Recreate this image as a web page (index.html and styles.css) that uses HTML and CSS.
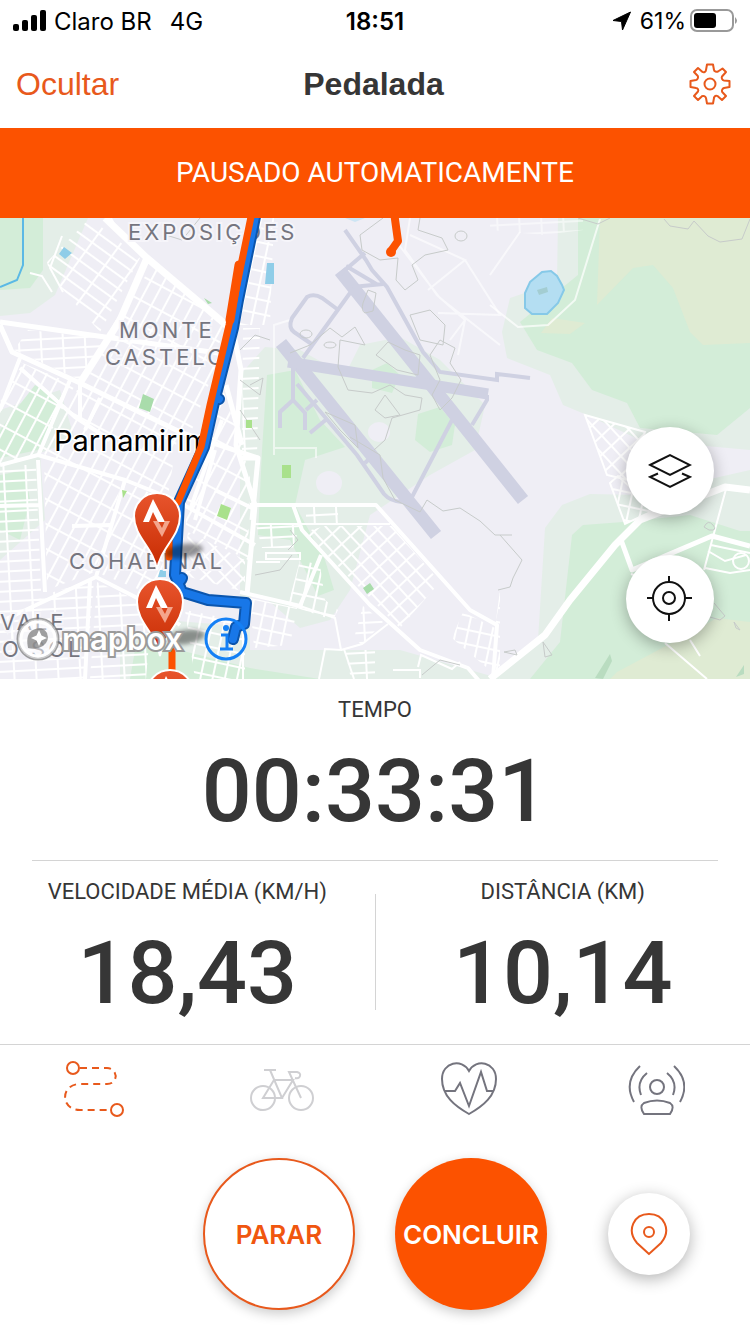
FILE: index.html
```html
<!DOCTYPE html>
<html lang="pt-BR">
<head>
    <meta charset="UTF-8">
    <meta name="viewport" content="width=device-width, initial-scale=1.0">
    <title>Pedalada</title>
    <link rel="stylesheet" href="styles.css">
</head>
<body>
    <!-- Status bar -->
    <div class="status-bar">
        <div class="status-left">
            <svg class="signal" width="34" height="22" viewBox="0 0 34 22">
                <rect x="1" y="14" width="6" height="7" rx="2"/>
                <rect x="10" y="10" width="6" height="11" rx="2"/>
                <rect x="19" y="5" width="6" height="16" rx="2"/>
                <rect x="28" y="0" width="6" height="21" rx="2"/>
            </svg>
            <span>Claro BR</span>
            <span class="network">4G</span>
        </div>
        <div class="status-time">18:51</div>
        <div class="status-right">
            <svg width="20" height="20" viewBox="0 0 20 20"><path d="M18.500 1 1 9.500 9.500 10.500 10.500 19Z" stroke="#000" stroke-linejoin="round"/></svg>
            <span>61%</span>
            <svg class="battery" width="48" height="24" viewBox="0 0 48 24">
                <rect x="1" y="1" width="42" height="21" rx="6" fill="none" stroke="#999" stroke-width="2"/>
                <rect x="4" y="4" width="22" height="15" rx="3"/>
                <path d="M45 8q4 4 0 7z" fill="#999"/>
            </svg>
        </div>
    </div>

    <!-- Navigation -->
    <header class="nav">
        <button class="hide-button">Ocultar</button>
        <h1 class="nav-title">Pedalada</h1>
        <button class="settings-button" aria-label="Configurações">
            <svg width="42" height="42" viewBox="0 0 42 42" fill="none" stroke="#e8591c" stroke-width="2" stroke-linejoin="round">
                <path d="M17 7 18 1.500h6L25 7q0 1 1.500 1.500t2.500 0L33.500 5.500 37 9 33 13.500q-.6 1 0 2.400T35 17.500l5.500.500v6L35 25q-1.200.4-1.800 1.700t0 2.300L37 33l-4 4-4.500-4q-1-.6-2.200 0T25 35l-1 5.500h-6L17 35q-.4-1.200-1.700-1.800t-2.300 0L9 37 5 33l4-4.500q.6-1 0-2.200T7 25l-5.500-1v-6L7 17q1.200-.4 1.800-1.700t0-2.300L5 9l4-4 4.500 4q1 .6 2.200 0T17 7z"/>
                <circle cx="21" cy="21" r="5.500"/>
            </svg>
        </button>
    </header>

    <div class="banner">PAUSADO AUTOMATICAMENTE</div>

    <!-- Map -->
    <main class="map">
        <svg class="map-canvas" viewBox="0 218 750 461" preserveAspectRatio="xMidYMid slice">
            <defs>
                <pattern id="gridA" width="12" height="22" patternUnits="userSpaceOnUse" patternTransform="rotate(28)">
                    <path d="M0 1H12M1 0V22" class="street"/>
                </pattern>
                <pattern id="gridB" width="11" height="24" patternUnits="userSpaceOnUse" patternTransform="rotate(-54)">
                    <path d="M0 1H11M1 0V24" class="street"/>
                </pattern>
                <pattern id="gridC" width="22" height="10" patternUnits="userSpaceOnUse" patternTransform="rotate(-3)">
                    <path d="M0 1H22M1 0V10" class="street"/>
                </pattern>
                <pattern id="gridD" width="14" height="12" patternUnits="userSpaceOnUse" patternTransform="rotate(47)">
                    <path d="M0 1H14M1 0V12" class="street"/>
                </pattern>
                <pattern id="gridE" width="12" height="14" patternUnits="userSpaceOnUse" patternTransform="rotate(12)">
                    <path d="M0 1H12M1 0V14" class="street"/>
                </pattern>
                <linearGradient id="pinFill" x1="0" y1="0" x2="0" y2="1">
                    <stop offset="0" stop-color="#e8552d"/>
                    <stop offset="1" stop-color="#c62a00"/>
                </linearGradient>
                <filter id="soft" x="-30%" y="-60%" width="160%" height="220%"><feGaussianBlur stdDeviation="2"/></filter>
                <g id="pin">
                    <path d="M0 54C-3 32-23 21-23 0a23 23 0 0 1 46 0C23 21 3 32 0 54z" fill="url(#pinFill)" stroke="#fff" stroke-width="2"/>
                    <path d="M-14 6-4-17 8 6H1L-4-4-8 6z" fill="#fff"/>
                    <path d="M-4 5H1L5 12 8 5H13L5 21z" fill="#f4a58c"/>
                </g>
            </defs>

            <rect y="218" width="750" height="461" fill="#efeef5"/>

            <!-- Vegetation -->
            <g fill="#e4eee8">
                <path d="M0 218H88L70 260 55 295 30 313 0 316z"/>
                <path d="M558 218 557 282 510 298 502 332 507 358 550 375 563 405 587 415 640 440 750 450V218z"/>
                <path d="M545 528 562 505 590 494 640 495 750 470V679H495L538 640z"/>
                <path d="M240 375 265 347 300 350 345 375 360 345 400 337 440 360 485 405 475 450 430 475 370 515 350 590 330 620 300 628 262 595 240 600z"/>
                <path d="M250 650H400L540 690H120V652L165 620 250 627z"/>
                <path d="M0 410 60 390 75 440 40 453 45 520 0 560z"/>
            </g>
            <g fill="#d3edd8">
                <path d="M0 218H43V270L30 288 0 290z"/>
                <path d="M578 218V275L520 322 537 350 572 363 592 390 627 403 640 428 717 435 750 408V218z"/>
                <path d="M572 535 583 525 623 522 690 515 740 531H750V679H530L560 642z"/>
                <path d="M267 375 295 370 320 420 345 447 305 460 295 505 325 560 334 590 318 596 290 540 258 535 262 450z"/>
                <path d="M418 414 440 407 455 425 452 445 430 452 415 440z"/>
                <path d="M372 370 387 363 400 375 392 393 372 388z"/>
                <path d="M135 650 160 645 250 668 320 679H130z"/>
                <path d="M0 430 35 385 60 400 38 450 0 458z"/>
                <path d="M0 475 25 470 30 500 20 540 0 530z"/>
            </g>
            <g fill="#dfebd3">
                <path d="M600 218 597 305 633 268 653 265 673 288 690 332 703 345 750 343V218z"/>
                <path d="M541 333 552 318 585 323 570 334z"/>
                <path d="M617 672 677 640 717 618 750 622V679H610z"/>
            </g>
            <ellipse cx="329" cy="483" rx="13" ry="12" fill="#efeef5"/>
            <ellipse cx="379" cy="432" rx="11" ry="10" fill="#efeef5"/>
            <path d="M595 678 610 654 612 661 603 679zM736 677 744 665 744 674z" fill="#b9dcc0"/>

            <!-- Blocks -->
            <path d="M90 218 140 258 100 332 50 275 47 262z" fill="url(#gridB)"/>
            <path d="M155 262 228 325 215 352 105 337 122 310z" fill="url(#gridA)"/>
            <path d="M28 330 105 338 80 380 14 350z" fill="url(#gridC)"/>
            <path d="M108 340 220 354 190 435 84 385z" fill="url(#gridA)"/>
            <path d="M20 362 75 385 40 453 0 465V402z" fill="url(#gridA)"/>
            <path d="M80 385 178 433 168 496 40 453z" fill="url(#gridA)"/>
            <path d="M0 465H36L43 640 0 640z" fill="url(#gridC)"/>
            <path d="M44 457 122 480 100 570 47 590z" fill="url(#gridA)"/>
            <path d="M47 594 94 580 86 679H0V620z" fill="url(#gridC)"/>
            <path d="M126 482 172 503 165 600 98 573z" fill="url(#gridA)"/>
            <path d="M97 582 152 607 146 679H90z" fill="url(#gridC)"/>
            <path d="M186 500 210 445 222 385 250 475 248 560 186 530z" fill="url(#gridA)"/>
            <path d="M188 532 245 560V592L182 575z" fill="url(#gridD)"/>
            <path d="M258 218 274 218 270 325 236 325z" fill="url(#gridE)"/>
            <path d="M243 328H260L257 455 242 452z" fill="url(#gridC)"/>
            <path d="M185 610 245 622 245 679H195z" fill="url(#gridE)"/>
            <path d="M250 598 297 608 290 645 254 648z" fill="url(#gridE)"/>
            <path d="M306 505H338V523H306z" fill="url(#gridC)"/>
            <path d="M256 525H300L293 548H262z" fill="url(#gridC)"/>
            <path d="M325 526H392L440 582 400 628 304 532z" fill="url(#gridD)"/>
            <path d="M300 560 320 565 325 600 338 610 333 620 288 605z" fill="url(#gridE)"/>
            <path d="M363 606 383 622 362 645 354 638z" fill="url(#gridC)"/>
            <path d="M345 650H375V679H351z" fill="url(#gridC)"/>
            <path d="M463 612 495 628 500 590V679L452 638z" fill="url(#gridE)"/>
            <path d="M585 415 645 432 628 480 607 475z" fill="url(#gridD)" class="district"/>
            <path d="M610 483 618 476 655 510 625 524z" fill="url(#gridE)" class="district"/>
            <path d="M490 218H583V230L545 235 490 230z" fill="url(#gridC)" opacity=".5"/>

            <!-- Small streets -->
            <g class="street" fill="none">
                <path d="M62 236 50 268 63 292M30 273 42 276 52 292"/>
                <path d="M255 524H390M256 562H280M265 553H300V559H266V553"/>
                <path d="M300 606 335 618 341 650 325 649 319 679M341 650 362 644 388 624M344 649 354 679"/>
                <path d="M600 219 575 300 548 325 518 327 490 305" opacity=".7"/>
                <path d="M711 545 725 548 750 553M708 551 725 561 746 555M705 568 730 573 750 570M705 580 690 590M726 489 704 570M631 574 664 586M665 643 707 679M690 640 700 656M418 667 421 655 452 669 460 662M393 670H420V678"/>
                <circle cx="741" cy="561" r="8"/>
            </g>
            <g fill="none" stroke="#fff" stroke-width="2" opacity=".6">
                <path d="M410 218 405 250 437 295 465 320 450 340M395 240 440 298 500 345M410 235 465 260 428 290M465 260 500 315 438 313M465 320 458 355M490 275 520 232"/>
                <path d="M274 455V325L290 320M274 455V448H316V458"/>
            </g>

            <!-- Main roads -->
            <g class="road" fill="none">
                <path d="M105 218 147 258 232 330M147 258 120 320 80 383" stroke-width="7"/>
                <path d="M0 322 105 337 225 354M0 325 12 352 80 383 180 432 258 458" stroke-width="5"/>
                <path d="M20 358 0 410M20 368 75 417 110 440M70 380 38 456M80 383V420M100 398 85 430" stroke-width="4"/>
                <path d="M0 465 38 455 125 480 175 500 255 545M38 460 45 592M0 506 40 505M72 526 110 525M125 480 96 577 0 622M96 577 155 607 180 625M90 580 85 679"/>
                <path d="M232 325 241 370 236 445 255 505 247 595 M241 458H258L252 520M226 385 242 445" stroke-width="5"/>
                <path d="M222 420 190 510M215 450 195 520M215 490 252 508M240 592 300 606 321 555M250 505H376L470 610 497 625 493 679M293 505 302 530 370 605 420 650 468 668 480 682"/>
                <path d="M490 679 545 635 570 600 615 545 640 520 725 487 750 490" stroke-width="7"/>
                <path d="M620 537 632 570 712 536 750 546" stroke-width="5"/>
                <path d="M111 218 116 228M243 600V679" stroke-width="2"/>
            </g>

            <!-- Airport -->
            <g stroke="#cfd1e2" fill="none">
                <path d="M340 271 523 500M281 343 436 535" stroke-width="13"/>
                <path d="M288 362 488 394" stroke-width="11"/>
                <path d="M345 230 366 260 372 270 387 287 423 352 440 372 497 380V374L530 378M365 253 338 276M346 266 378 285M352 287 383 284" stroke-width="4"/>
                <path d="M337 309 322 298Q314 293 307 297L292 318Q288 328 294 332L313 345M350 293 303 358M293 362V400L280 412V428M293 400 305 413V430M297 384 357 455 384 494Q390 501 402 502M452 420 412 497M487 395V400L472 425M310 433 328 418M317 400 306 410M365 463 370 458" stroke-width="4"/>
            </g>

            <!-- Contours -->
            <g fill="none" stroke="#c7cbca" stroke-width="1">
                <path d="M383 218 360 235 362 250 380 260 398 258 396 280 405 290 418 280 412 265 425 255 448 250 442 238 418 230 420 218"/>
                <path d="M290 353 310 345 330 328 342 337 355 327 365 345 340 340 338 367 348 390 372 393 390 385 405 395 422 398 420 410 392 418 385 440 374 450M376 355 388 342 405 350 420 355 418 375 397 370 390 365zM375 410 385 395 400 415 385 418zM325 412 340 430 358 448 355 425zM440 340 455 348 450 363 461 380 452 398 440 410 432 395 440 380 430 355z"/>
                <path d="M350 437 380 455 383 478 395 500 420 512 427 500 443 511 460 508 480 521 495 535 512 535M363 303q-2 8 2 10l8-2 3-18-8-3zM430 310 445 325 443 345 420 340 410 315z"/>
                <path d="M664 219 670 226 688 229 694 221 708 236 720 242 742 239 750 219M500 535 522 560 513 578 510 587 498 590M504 652 515 650 517 655zM543 642 552 655 545 657zM578 218 598 224 610 218M704 527q4-8 9-2t-4 5zM714 603 725 616 720 620 710 617M734 622 740 630 736 628z"/>
                <path d="M240 350 255 335 270 340M250 385 263 378 260 395 240 380M290 530 298 540 288 550M255 575 280 570 292 555M166 235 182 240 200 218M240 410 260 440M422 675 440 660 460 665"/>
                <ellipse cx="306" cy="334" rx="6" ry="4"/><ellipse cx="330" cy="345" rx="6" ry="3"/><ellipse cx="461" cy="236" rx="6" ry="5"/>
            </g>

            <!-- Water and parks -->
            <path d="M23 218V265L17 280 0 287" fill="none" stroke="#5bb9e5" stroke-width="2"/>
            <path d="M530 282 542 272 551 271 557 276 562 285 564 290 558 303 547 314H532L525 308V293z" fill="#b4def2" stroke="#86c9e8" stroke-width="2"/>
            <path d="M537 290 547 287 548 292 539 295z" fill="#a3cdd2"/>
            <path d="M64 247 72 253 65 259 59 254zM267 263H274V284H265zM160 570H166V577H158z" fill="#8fcde8"/>
            <path d="M345 218 355 222 365 218zM366 220H384" fill="#cde5f4"/>
            <path d="M143 394 154 399 150 412 139 408zM204 298 212 303 208 304zM363 588 370 583 374 589 367 594z" fill="#a9dcab"/>
            <path d="M282 465H291V478H282zM246 420H252V428H246zM221 504 231 508 227 520 217 516zM122 490 127 491 123 498z" fill="#a9e18c"/>

            <!-- Place names -->
            <g class="district-name">
                <text x="128" y="240">EXPOSIÇÕES</text>
                <text x="119" y="338">MONTE</text>
                <text x="105" y="365">CASTELO</text>
                <text x="69" y="569">COHABINAL</text>
                <text x="0" y="630">VALE</text>
                <text x="2" y="657">O SOL</text>
            </g>
            <text class="city-name" x="54" y="451">Parnamirim</text>

            <!-- Route -->
            <g class="track">
                <path d="M256 212 238 300 233 328 215 398 204 447 179 502 175 575 182 592 208 600 246 603 244 624 236 627 233 639M181 580 182 578M217 398 219 399" stroke="#0b55ad" stroke-width="12"/>
                <path d="M256 212 238 300 233 328 215 398 204 447 179 502 175 575 182 592 208 600 246 603 244 624 236 627 233 639M181 580 182 578M217 398 219 399" stroke="#1877e8" stroke-width="8"/>
                <path d="M252 212 241 265 229 325 210 405 201 447 178 502M169 520V557M172 640V685" stroke="#fc5200" stroke-width="7"/>
                <path d="M239 265 230 320" stroke="#fc5200" stroke-width="9"/>
                <path d="M394 212 398 241 391 251" stroke="#fc5200" stroke-width="8"/>
                <circle cx="391" cy="252" r="5" fill="#fc5200"/>
            </g>

            <!-- Segment pins -->
            <g fill="#000" opacity=".4" filter="url(#soft)">
                <ellipse cx="184" cy="551" rx="19" ry="7" transform="rotate(-8 184 551)"/>
                <ellipse cx="186" cy="637" rx="19" ry="7" transform="rotate(-8 186 637)"/>
            </g>
            <use href="#pin" x="157" y="516"/>
            <use href="#pin" x="160" y="602"/>
            <use href="#pin" x="170" y="693"/>
        </svg>

        <div class="attribution">
            <a class="mapbox-logo" href="#">
                <svg width="44" height="44" viewBox="0 0 44 44" fill="none">
                    <circle cx="22" cy="22" r="20" fill="#fff" fill-opacity=".5" stroke="#777" stroke-opacity=".7" stroke-width="3"/>
                    <circle cx="22" cy="22" r="17" stroke="#fff" stroke-width="3"/>
                    <path d="M12 31Q9 16 18 12.500 27 9 31 16 34 24 27 29 21 33 12 31z" fill="#777" fill-opacity=".7"/>
                    <path d="m23 13 2.500 5.500L31 21l-5.500 2.500L23 29l-2.500-5.500L15 21l5.500-2.500z" fill="#fff"/>
                </svg>
                <span>mapbox</span>
            </a>
            <button class="info-button" aria-label="Informações do mapa">
                <svg width="44" height="44" viewBox="0 0 44 44" fill="none" stroke="#1480f5" stroke-width="3">
                    <circle cx="22" cy="22" r="20"/>
                    <path d="M17 18H23V32M16 32H29" stroke-width="3"/>
                    <circle cx="22" cy="11" r="3" fill="#1480f5" stroke="none"/>
                </svg>
            </button>
        </div>

        <div class="map-controls">
            <button class="round-button" aria-label="Camadas">
                <svg width="44" height="44" viewBox="0 0 44 44" fill="none" stroke="#111" stroke-width="2">
                    <path d="M2 16 22 6 42 16 22 26zM10 24.500 2 28 22 38 42 28 34 24.500"/>
                </svg>
            </button>
            <button class="round-button" aria-label="Minha localização">
                <svg width="46" height="46" viewBox="0 0 46 46" fill="none" stroke="#111" stroke-width="2">
                    <circle cx="22" cy="22" r="16"/>
                    <circle cx="22" cy="22" r="6"/>
                    <path d="M22 0V6M22 38V45M0 22H6M38 22H45"/>
                </svg>
            </button>
        </div>
    </main>

    <!-- Stats -->
    <section class="stats">
        <div class="stat stat-time">
            <div class="stat-label">TEMPO</div>
            <div class="stat-value">00:33:31</div>
        </div>
        <div class="stat-row">
            <div class="stat">
                <div class="stat-label">VELOCIDADE MÉDIA (KM/H)</div>
                <div class="stat-value">18,43</div>
            </div>
            <div class="stat-divider"></div>
            <div class="stat">
                <div class="stat-label">DISTÂNCIA (KM)</div>
                <div class="stat-value">10,14</div>
            </div>
        </div>
    </section>

    <!-- Tools -->
    <nav class="tools">
        <button class="tool" aria-label="Rota">
            <svg width="64" height="60" viewBox="0 0 64 60" fill="none" stroke="#e8591c" stroke-width="2">
                <circle cx="11" cy="10" r="6"/>
                <circle cx="55" cy="52" r="6"/>
                <path d="M18 10H45C56 10 57 26 45 26H18C-2 26-2 52 18 52H49" stroke-dasharray="7 5"/>
            </svg>
        </button>
        <button class="tool" aria-label="Bicicleta">
            <svg width="66" height="60" viewBox="0 0 66 60" fill="none" stroke="#cfcfd2" stroke-width="2">
                <circle cx="15" cy="40" r="12"/>
                <circle cx="53" cy="40" r="12"/>
                <path d="M16 12H28M22 12 34 40H15L26 22H45L34 40M53 40 41 14H49Q53 15 52 18T47 20"/>
            </svg>
        </button>
        <button class="tool" aria-label="Frequência cardíaca">
            <svg width="58" height="60" viewBox="0 0 58 60" fill="none" stroke="#74747e" stroke-width="2">
                <path d="M29 13C22 0 2 4 2 21 2 38 15 48 29 56 43 48 56 38 56 21 56 4 36 0 29 13z"/>
                <path d="M5 33H15L20 25 29 48 41 14 47 33H53"/>
            </svg>
        </button>
        <button class="tool" aria-label="Beacon">
            <svg width="58" height="60" viewBox="0 0 58 60" fill="none" stroke="#74747e" stroke-width="2">
                <circle cx="30" cy="29" r="7"/>
                <path d="M17 56C13 50 14 47 17 45Q30 40 43 45C46 47 47 50 43 56zM13 8Q-4 24 7 44M47 8Q64 24 53 44M20 15Q9 24 14 37M40 15Q51 24 46 37"/>
            </svg>
        </button>
    </nav>

    <!-- Actions -->
    <footer class="actions">
        <div class="main-actions">
            <button class="action-button stop-button">PARAR</button>
            <button class="action-button finish-button">CONCLUIR</button>
        </div>
        <button class="round-button pin-button" aria-label="Marcar local">
            <svg width="38" height="44" viewBox="0 0 38 44" fill="none" stroke="#e8591c" stroke-width="2">
                <path d="M19 42 7 31C-4 18 4 2 19 2S42 18 31 31z"/>
                <circle cx="19" cy="20" r="5"/>
            </svg>
        </button>
    </footer>
</body>
</html>
```
FILE: styles.css
```css
* {
    box-sizing: border-box;
}

body {
    margin: 0;
    min-height: 100vh;
    display: flex;
    flex-direction: column;
    background-color: #fff;
    color: #363636;
    font-family: Roboto, 'Liberation Sans', sans-serif;
}

button {
    margin: 0;
    padding: 0;
    border: none;
    background: none;
    font-family: inherit;
    cursor: pointer;
}

svg {
    display: block;
}

/* Status bar */
.status-bar {
    display: grid;
    grid-template-columns: 1fr auto 1fr;
    align-items: center;
    height: 42px;
    padding: 0 12px;
    color: #000;
    font-family: Inter, sans-serif;
    font-size: 24px;
}

.status-left,
.status-right {
    display: flex;
    align-items: center;
    gap: 8px;
}

.network {
    margin-left: 10px;
}

.status-time {
    font-weight: 600;
}

.status-right {
    justify-content: flex-end;
}

.status-right span {
    font-size: 23px;
}

.battery {
    margin-left: -4px;
}

/* Navigation */
.nav {
    display: grid;
    grid-template-columns: 1fr auto 1fr;
    align-items: center;
    height: 86px;
    padding: 0 19px 2px 16px;
}

.hide-button {
    justify-self: start;
    color: #e8591c;
    font-family: 'Liberation Sans', sans-serif;
    font-size: 32px;
}

.nav-title {
    margin: 0;
    font-family: 'Liberation Sans', sans-serif;
    font-size: 32px;
    font-weight: 700;
}

.settings-button {
    justify-self: end;
}

.banner {
    padding: 24px 16px;
    background-color: #fc5200;
    color: #fff;
    font-size: 28px;
    line-height: 42px;
    text-align: center;
}

/* Map */
.map {
    position: relative;
    flex: 1 0 360px;
    overflow: hidden;
    background-color: #efeef5;
}

.map-canvas {
    position: absolute;
    inset: 0;
    width: 100%;
    height: 100%;
}

.street {
    fill: none;
    stroke: #fff;
    stroke-width: 2;
}

.district {
    stroke: #fff;
    stroke-width: 2;
}

.road {
    stroke: #fff;
    stroke-width: 4;
    stroke-linejoin: round;
}

.district-name {
    fill: #75757f;
    stroke: #f6f5fa;
    stroke-width: 4px;
    paint-order: stroke;
    font-family: Inter, sans-serif;
    font-size: 22px;
    letter-spacing: 3px;
}

.city-name {
    fill: #000;
    stroke: #fff;
    stroke-width: 3px;
    paint-order: stroke;
    font-family: Inter, sans-serif;
    font-size: 29px;
}

.track {
    fill: none;
    stroke-linecap: round;
    stroke-linejoin: round;
}

.attribution {
    position: absolute;
    left: 16px;
    bottom: 18px;
    display: flex;
    align-items: center;
    gap: 22px;
}

.mapbox-logo {
    display: flex;
    align-items: center;
    gap: 2px;
    color: #fff;
    font-family: Inter, sans-serif;
    font-size: 31px;
    font-weight: 600;
    line-height: 44px;
    text-decoration: none;
    -webkit-text-stroke: 4px #9a9a9a;
    paint-order: stroke;
}

.map-controls {
    position: absolute;
    right: 36px;
    bottom: 36px;
    display: flex;
    flex-direction: column;
    gap: 40px;
}

.round-button {
    display: flex;
    align-items: center;
    justify-content: center;
    width: 88px;
    height: 88px;
    border-radius: 50%;
    background-color: #fff;
    box-shadow: 0 4px 16px rgba(0, 0, 0, 0.3);
}

/* Stats */
.stat {
    text-align: center;
}

.stat-time {
    margin: 0 32px;
    padding: 17px 0 16px;
    border-bottom: 1px solid #d4d4d4;
}

.stat-label {
    font-size: 22px;
    line-height: 28px;
}

.stat-value {
    padding-top: 14px;
    font-size: 88px;
    font-weight: 500;
    line-height: 106px;
}

.stat-row {
    display: grid;
    grid-template-columns: 1fr 1px 1fr;
    padding: 17px 0 18px;
}

.stat-divider {
    margin: 16px 0;
    background-color: #d4d4d4;
}

/* Tools */
.tools {
    display: grid;
    grid-template-columns: repeat(4, 1fr);
    border-top: 1px solid #d4d4d4;
}

.tool {
    display: flex;
    justify-content: center;
    padding: 13px 0 16px;
}

/* Actions */
.actions {
    display: grid;
    grid-template-columns: 1fr auto 1fr;
    align-items: center;
    padding: 24px 0;
}

.main-actions {
    grid-column: 2;
    display: flex;
    gap: 40px;
}

.action-button {
    width: 152px;
    height: 152px;
    border-radius: 50%;
    font-family: Inter, sans-serif;
    font-size: 26px;
    font-weight: 600;
    box-shadow: 0 4px 12px rgba(0, 0, 0, 0.2);
}

.stop-button {
    border: 2px solid #e8591c;
    background-color: #fff;
    color: #f0560f;
}

.finish-button {
    background-color: #fc5200;
    color: #fff;
}

.pin-button {
    justify-self: center;
    width: 82px;
    height: 82px;
}
```
